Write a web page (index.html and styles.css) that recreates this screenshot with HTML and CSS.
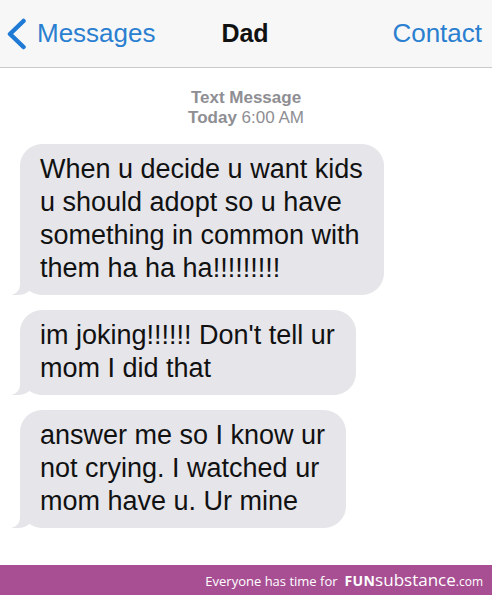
FILE: index.html
```html
<!doctype html>
<html lang="en">
	<head>
		<meta charset="UTF-8" />
		<meta name="viewport" content="width=device-width, initial-scale=1.0" />
		<title>Dad</title>
		<link rel="stylesheet" href="styles.css">
	</head>

	<body>
		<header class="navbar">
			<a class="nav-back" href="#">
				<svg class="chevron" width="22" height="32" viewBox="0 0 22 32">
					<path d="M17.5 3 L4 16 L17.5 29" fill="none" stroke="#1f7ad6" stroke-width="4.5" stroke-linecap="round" stroke-linejoin="round" />
				</svg>
				Messages
			</a>
			<h1 class="nav-title">Dad</h1>
			<a class="nav-contact" href="#">Contact</a>
		</header>

		<main class="thread">
			<div class="stamp">
				<div><b>Text Message</b></div>
				<div><b>Today</b> 6:00 AM</div>
			</div>

			<div class="bubble">When u decide u want kids<br>u should adopt so u have<br>something in common with<br>them ha ha ha!!!!!!!!!</div>
			<div class="bubble">im joking!!!!!! Don't tell ur<br>mom I did that</div>
			<div class="bubble">answer me so I know ur<br>not crying. I watched ur<br>mom have u. Ur mine</div>
		</main>

		<footer class="brand">
			Everyone has time for <span class="fun">FUN</span><span class="sub">substance</span><span class="com">.com</span>
		</footer>
	</body>
</html>
```

FILE: styles.css
```css
html,
body {
	margin: 0;
	height: 100%;
}

body {
	font-family: "Liberation Sans", Arial, sans-serif;
	background-color: #fff;
	display: flex;
	flex-direction: column;
	width: 492px;
	overflow: hidden;
}

.navbar {
	height: 67px;
	background-color: #f7f7f7;
	border-bottom: 1px solid #c9c9cc;
	display: flex;
	align-items: center;
	justify-content: space-between;
	padding: 0 10px 0 6px;
	position: relative;
	flex-shrink: 0;
}

.nav-back,
.nav-contact {
	color: #2a7fd0;
	text-decoration: none;
	font-size: 26px;
	display: flex;
	align-items: center;
	gap: 9px;
}

.nav-title {
	position: absolute;
	left: 0;
	right: 0;
	text-align: center;
	margin: 0 0 0 -2px;
	font-size: 25px;
	pointer-events: none;
	color: #111;
}

.thread {
	display: flex;
	flex-direction: column;
	align-items: flex-start;
	gap: 15px;
	padding: 20px 0 0 20px;
}

.stamp {
	align-self: stretch;
	text-align: center;
	color: #8e8e93;
	font-size: 17px;
	line-height: 20px;
	margin: 0 0 1px -20px;
}

.bubble {
	position: relative;
	background-color: #e5e5ea;
	border-radius: 22px;
	padding: 9px 21px 10px 20px;
	font-size: 27px;
	line-height: 33px;
	color: #111;
}

.bubble::before {
	content: "";
	position: absolute;
	left: -8px;
	bottom: 0;
	width: 22px;
	height: 24px;
	background-color: #e5e5ea;
	border-bottom-right-radius: 16px 14px;
}

.bubble::after {
	content: "";
	position: absolute;
	left: -26px;
	bottom: 0;
	width: 26px;
	height: 24px;
	background-color: #fff;
	border-bottom-right-radius: 10px;
}

.brand {
	margin-top: auto;
	height: 30px;
	background-color: #a84f94;
	color: #fff;
	display: flex;
	align-items: baseline;
	justify-content: flex-end;
	padding: 0 9px 0 0;
	font-family: "Open Sans", sans-serif;
	font-size: 13px;
	line-height: 30px;
	flex-shrink: 0;
}

.fun {
	font-weight: bold;
	font-size: 14px;
	margin-left: 7px;
	letter-spacing: 0.3px;
}

.sub {
	font-size: 17px;
}

.com {
	font-size: 12px;
}
```
